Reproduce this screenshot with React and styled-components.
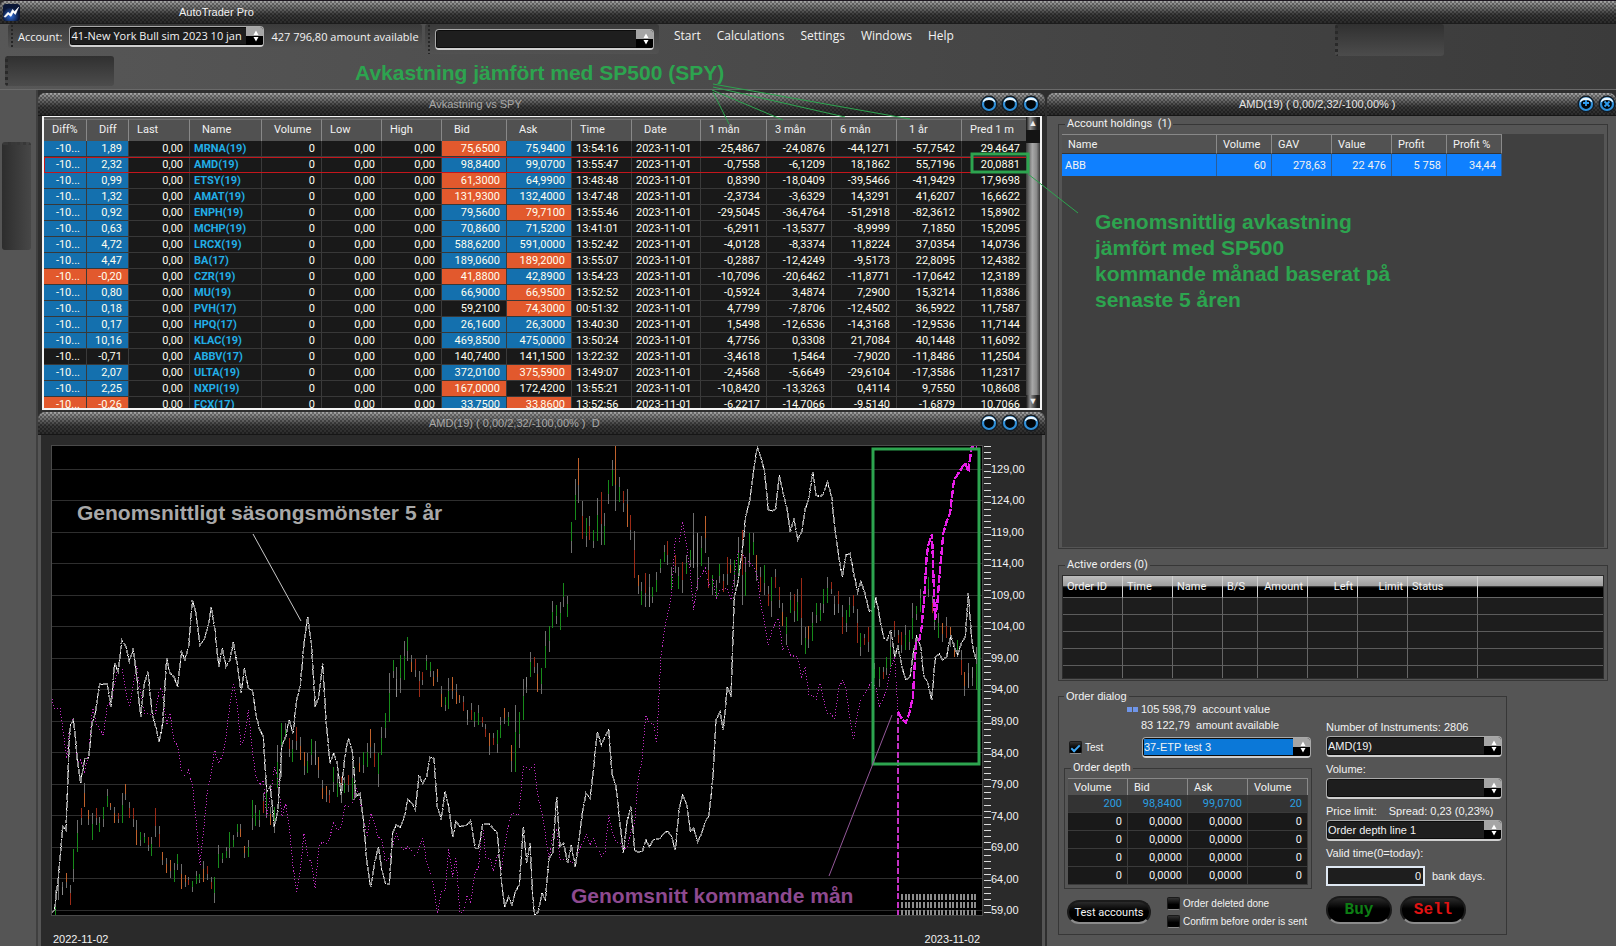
import React from "react";
import styled, { createGlobalStyle, css } from "styled-components";

const GlobalStyle = createGlobalStyle`
  * {
    box-sizing: border-box;
  }

  body {
    margin: 0;
    background: #2c2c2c;
    color: #f2f2f2;
    font-family: Roboto, "Open Sans", sans-serif;
    font-size: 11px;
  }

  button,
  input,
  select {
    font: inherit;
    color: inherit;
    margin: 0;
  }
`;

const plainFont = css`
  font-family: "Liberation Sans", Arial, sans-serif;
  font-size: 11px;
`;

const toolFont = css`
  font-family: "Open Sans", "Noto Sans", sans-serif;
  font-size: 11px;
`;

/* Carbon fibre look shared by every title bar */
const carbon = css`
  background:
    repeating-conic-gradient(rgba(0, 0, 0, 0.32) 0 25%, transparent 0 50%) 0 0 / 4px 4px,
    linear-gradient(#a8a8a8 0, #7c7c7c 20%, #5c5c5c 42%, #3a3a3a 62%, #2b2b2b 100%);
`;

const Page = styled.div`
  position: relative;
  display: flex;
  flex-direction: column;
  height: 100vh;
  min-height: 940px;
  overflow: hidden;
`;

const AppTitle = styled.header`
  ${carbon}
  ${plainFont}
  display: flex;
  align-items: center;
  gap: 159px;
  height: 24px;
  padding-left: 3px;
  border-top: 1px solid #1c1620;
  border-bottom: 1px solid #1c1c1c;
  border-radius: 6px 0 0 0;
`;

const ToolArea = styled.div`
  display: flex;
  flex-direction: column;
  gap: 6px;
  height: 66px;
  background: linear-gradient(90deg, #575757, #494949 50%, #3b3b3b);
  border-bottom: 1px solid #6a6a6a;
`;

const ToolRow = styled.div`
  ${toolFont}
  display: flex;
  align-items: flex-start;
  height: 26px;
`;

const Tray = styled.div`
  display: flex;
  align-items: center;
  gap: 7px;
  height: 24px;
  padding-left: 10px;
  border-radius: 3px;
  background:
    radial-gradient(circle, #262626 1px, transparent 1px) 2px 4px / 4px 4px repeat-y,
    linear-gradient(#3a3a3a, #525252);
`;

const AccountTray = styled(Tray)`
  width: 414px;
  margin-left: 8px;
  white-space: nowrap;
`;

const SearchTray = styled(Tray)`
  width: 234px;
  height: 30px;
  margin-left: 3px;
`;

const EmptyTray = styled.div`
  flex: none;
  width: 109px;
  height: 30px;
  margin-left: ${(p) => p.$left}px;
  border-radius: 3px;
  background: linear-gradient(#303030, #4c4c4c);
  border-left: 3px dotted #292929;
`;

const Menu = styled.nav`
  display: flex;
  flex: 1;
  gap: 16px;
  padding: 3px 0 0 15px;
  font-size: 12px;

  a {
    color: inherit;
    line-height: 18px;
    text-decoration: none;
  }
`;

const FloatTray = styled(EmptyTray)`
  height: 32px;
  margin: 0 172px 0 0;
`;

const Workspace = styled.main`
  display: flex;
  flex: 1;
  min-height: 0;
  background: #2e2e2e;
`;

const Rail = styled.aside`
  flex: none;
  width: 38px;
  padding: 52px 5px 0 2px;
  background: #555;
  border-right: 2px solid #3f3f3f;
`;

const RailTray = styled.div`
  height: 108px;
  border-radius: 3px;
  background: linear-gradient(90deg, #2d2d2d, #474747);
  border-top: 3px dotted #383838;
`;

const Desktop = styled.div`
  display: grid;
  grid-template-columns: minmax(0, 1007fr) minmax(0, 569fr);
  gap: 2px;
  flex: 1;
  padding-top: 3px;
  min-width: 0;
`;

const Stack = styled.div`
  display: flex;
  flex-direction: column;
  gap: 2px;
  min-height: 0;
`;

const WindowFrame = styled.section`
  display: flex;
  flex-direction: column;
  flex: ${(p) => (p.$grow ? "1" : "none")};
  min-height: 0;
`;

const TitleBar = styled.div`
  ${carbon}
  ${plainFont}
  display: flex;
  align-items: center;
  gap: 3px;
  height: 23px;
  padding: 0 ${(p) => (p.$active ? 0 : 5)}px 0 ${(p) => p.$indent}px;
  border-bottom: 1px solid #161616;
  border-radius: 7px 7px 0 0;
  color: ${(p) => (p.$active ? "#e6e6e6" : "#a9a9a9")};

  h2 {
    flex: 1;
    margin: 0;
    font-size: inherit;
    font-weight: normal;
    white-space: pre;
  }
`;

const OrbButton = styled.button`
  display: flex;
  width: 18px;
  height: 18px;
  padding: 0;
  border: 0;
  background: none;
`;

const QuoteView = styled.div`
  display: flex;
  height: 294px;
  margin: 0 3px 0 4px;
  border: 2px solid #f4f4f4;
  border-top-width: 1px;
  background: #555;
  overflow: hidden;
`;

const QuoteScroll = styled.div`
  flex: 1;
  padding-top: 2px;
  min-width: 0;
  overflow: hidden;
`;

const QuoteTable = styled.table`
  width: 100%;
  table-layout: fixed;
  border-collapse: separate;
  border-spacing: 0;
  line-height: 15px;
  white-space: nowrap;

  th {
    height: 22px;
    padding: 0 0 2px 8px;
    border-right: 1px solid #888;
    border-top: 1px solid #707070;
    background: #515151;
    font-weight: normal;
    text-align: left;
  }

  th.inset {
    padding-left: 12px;
  }
`;

const tones = { up: "#1470ae", down: "#e2592d", none: "#191919" };

const QuoteCell = styled.td`
  height: 16px;
  padding: 0 ${(p) => (p.$left ? 4 : 6)}px;
  border-right: 1px solid #3a3a3a;
  border-bottom: 1px solid #383838;
  background: ${(p) => tones[p.$tone || "none"]};
  color: ${(p) => (p.$name ? "#22aee6" : "#fffff0")};
  font-weight: ${(p) => (p.$name ? "bold" : "normal")};
  text-align: ${(p) => (p.$left ? "left" : "right")};
`;

const QuoteRow = styled.tr`
  outline: ${(p) => (p.$selected ? "1px solid #c4161c" : "none")};
  outline-offset: -1px;
`;

const ScrollBar = styled.div`
  display: flex;
  flex-direction: column;
  width: 14px;
  background: linear-gradient(90deg, #3a3a3a, #a8a8a8 45%, #8a8a8a 75%, #3c3c3c);

  button {
    height: 13px;
    padding: 0;
    border: 0;
    background: linear-gradient(90deg, #161616, #8e8e8e 30%, #222 80%);
    color: #eee;
    font-size: 9px;
    line-height: 13px;
  }

  i {
    flex: 1;
    border-top: 13px solid #141414;
  }
`;

const ChartBody = styled.div`
  position: relative;
  display: grid;
  grid-template-columns: minmax(0, 1fr) 8px 51px;
  grid-template-rows: minmax(0, 1fr) 30px;
  flex: 1;
  min-height: 0;
  padding: 10px 0 0 10px;
  background: #2a2a2a;
  border-left: 3px solid #555;
  border-right: 3px solid #555;
`;

const Plot = styled.svg`
  width: 100%;
  height: 100%;
  background: #000;
  outline: 1px solid #4a4a4a;
  outline-offset: -1px;
`;

const Scale = styled.ol`
  ${plainFont}
  display: grid;
  grid-template-rows: repeat(15, 1fr);
  align-items: center;
  margin: 8px 0 -10px;
  padding: 0;
  list-style: none;
`;

const DateRow = styled.div`
  ${plainFont}
  display: flex;
  justify-content: space-between;
  align-items: flex-end;
  padding: 0 3px 1px 2px;
`;

const Panel = styled.div`
  display: flex;
  flex-direction: column;
  gap: 9px;
  flex: 1;
  min-height: 0;
  padding: 1px 8px 11px 11px;
  background: #555;
`;

const Group = styled.fieldset`
  display: flex;
  flex-direction: column;
  min-width: 0;
  min-height: 0;
  margin: 0;
  padding: ${(p) => p.$pad || "3px 3px 1px"};
  border: 1px solid #373737;
  flex: ${(p) => (p.$grow ? "1" : "none")};

  legend {
    margin-left: 3px;
    padding: 0 2px;
    line-height: 14px;
    font-family: Roboto, "Open Sans", sans-serif;
    font-size: 11px;
  }
`;

const HoldingsArea = styled.div`
  flex: 1;
  background: #404040;
`;

const HoldingsTable = styled.table`
  width: 440px;
  table-layout: fixed;
  border-collapse: separate;
  border-spacing: 0;

  th {
    height: 20px;
    padding: 0 6px;
    background: #525252;
    border-top: 1px solid #888;
    border-right: 1px solid #8a8a8a;
    border-bottom: 1px solid #333;
    font-weight: normal;
    text-align: left;
  }

  td {
    height: 22px;
    padding: 0 5px 0 3px;
    background: #0f80ff;
    border-right: 1px solid #2a5d98;
    text-align: right;
  }

  td:first-child {
    text-align: left;
  }
`;

const OrdersTable = styled.table`
  width: 100%;
  table-layout: fixed;
  border-collapse: separate;
  border-spacing: 0;
  background: #1d1d1d;
  border: 1px solid #2c2c2c;

  th {
    height: 22px;
    padding: 0 4px;
    background: linear-gradient(#bdbdbd 0, #9c9c9c 48%, #3a3a3a 50%, #000 56%, #000);
    border-right: 1px solid #cfcfcf;
    border-bottom: 1px solid #666;
    font-weight: normal;
    text-align: left;
  }

  th.num {
    text-align: right;
  }

  td {
    height: 17px;
    padding: 0;
    border-right: 1px solid #666;
    border-bottom: 1px solid #5c5c5c;
  }

  tr:last-child td {
    height: 12px;
    border-bottom: 0;
  }

  th:last-child,
  td:last-child {
    border-right: 0;
  }
`;

const OrderGroup = styled(Group)`
  width: 449px;
  margin-top: 1px;
  padding: 0 4px 4px 5px;

  > legend {
    ${plainFont}
    margin-left: 0;
    line-height: 10px;
  }
`;

const OrderGrid = styled.div`
  ${plainFont}
  display: flex;
  gap: 14px;
`;

const OrderLeft = styled.div`
  width: 248px;
`;

const OrderRight = styled.div`
  display: flex;
  flex-direction: column;
  flex: 1;
  padding-top: 18px;
`;

const Balance = styled.p`
  display: flex;
  align-items: center;
  gap: 3px;
  margin: 0;
  padding-left: ${(p) => (p.$marked ? 63 : 77)}px;
  line-height: 16px;
  white-space: pre;
`;

const Marker = styled.span`
  width: 11px;
  height: 5px;
  background: linear-gradient(90deg, #6f95e8 5px, transparent 5px 6px, #6f95e8 6px);
`;

const TestRow = styled.div`
  display: flex;
  align-items: center;
  justify-content: space-between;
  height: 28px;
  padding: 0 1px 0 5px;
`;

const CheckLabel = styled.label`
  display: flex;
  align-items: center;
  gap: 3px;
  height: 18px;
  font-size: 10px;
  white-space: nowrap;

  input {
    display: grid;
    place-items: center;
    width: 13px;
    height: 13px;
    appearance: none;
    background: linear-gradient(#333, #000 60%);
    border: 1px solid #1b1b1b;
    border-bottom-color: #8a8a8a;
    border-radius: 2px;
  }

  input:checked::after {
    content: "";
    width: 7px;
    height: 3px;
    border: solid #3ea6f2;
    border-width: 0 0 2px 2px;
    transform: rotate(-45deg);
  }
`;

const ComboBox = styled.span`
  display: flex;
  align-items: center;
  width: ${(p) => (p.$width ? `${p.$width}px` : "100%")};
  height: 21px;
  padding-left: 1px;
  border: 1px solid #a9a9a9;
  border-bottom: 2px solid #d0d0d0;
  border-radius: 4px;
  background: #0c0c0c;
  overflow: hidden;

  select {
    flex: 1;
    min-width: 0;
    height: 16px;
    padding: 0;
    appearance: none;
    border: 0;
    background: ${(p) => (p.$picked ? "#0b78d8" : "#1e1e1e")};
    line-height: 16px;
  }
`;

const DepthTable = styled.table`
  width: 100%;
  table-layout: fixed;
  border-collapse: separate;
  border-spacing: 0;
  font-family: Roboto, "Open Sans", sans-serif;
  font-size: 11px;

  th {
    height: 17px;
    padding: 0 6px;
    background: #505050;
    border-top: 1px solid #888;
    border-right: 1px solid #8a8a8a;
    font-weight: normal;
    text-align: left;
  }

  td {
    height: 18px;
    padding: 0 5px;
    background: #191919;
    border-right: 1px solid #3a3a3a;
    border-bottom: 1px solid #3a3a3a;
    text-align: right;
  }

  tr.best td {
    background: #333;
    color: #2a9fe0;
  }
`;

const ActionRow = styled.div`
  display: flex;
  gap: 16px;
  padding: 5px 0 0 3px;
`;

const PillButton = styled.button`
  flex: none;
  height: ${(p) => (p.$big ? 28 : 24)}px;
  width: ${(p) => (p.$big ? 66 : 84)}px;
  margin-top: ${(p) => (p.$big ? 0 : 6)}px;
  padding: 0;
  border: 2px solid #1a1a1a;
  border-bottom-color: #8b8b8b;
  border-radius: 14px;
  background: linear-gradient(#2b2b2b, #000 45%);
  color: ${(p) => p.$color || "#f4f4f4"};
  font-family: ${(p) => (p.$big ? '"Liberation Mono", monospace' : "Roboto, sans-serif")};
  font-size: ${(p) => (p.$big ? 16 : 11)}px;
  font-weight: ${(p) => (p.$big ? "bold" : "normal")};
  white-space: nowrap;
`;

const FieldLabel = styled.label`
  display: flex;
  flex-direction: column;
  line-height: 17px;
  margin-bottom: 4px;
  white-space: nowrap;

  span > span {
    margin-left: 12px;
  }
`;

const DaysRow = styled.div`
  display: flex;
  align-items: center;
  gap: 7px;
  margin-bottom: 10px;

  input {
    width: 99px;
    height: 20px;
    padding: 0 2px;
    border: 2px solid #dfe8f2;
    background: #1e1e1e;
    text-align: right;
  }
`;

const TradeRow = styled.div`
  display: flex;
  gap: 8px;
`;

/* Notes and pointer lines lie over the windows */
const Pointers = styled.svg`
  position: absolute;
  inset: 0;
  width: 1616px;
  height: 946px;
  pointer-events: none;
`;

const Note = styled.p`
  position: absolute;
  left: ${(p) => p.$x}px;
  top: ${(p) => p.$y}px;
  margin: 0;
  color: ${(p) => p.$color};
  font: bold 21px/26px "Liberation Sans", Arial, sans-serif;
  white-space: pre-line;
`;

const quoteColumns = [
  ["Diff%", 43], ["Diff", 42, 1], ["Last", 61], ["Name", 72, 1],
  ["Volume", 60, 1], ["Low", 60], ["High", 60], ["Bid", 65, 1],
  ["Ask", 65, 1], ["Time", 60], ["Date", 69, 1], ["1 mån", 66],
  ["3 mån", 65], ["6 mån", 65], ["1 år", 65, 1], ["Pred 1 m", 65],
];

// diff, name, bid, ask, time, 1 m, 3 m, 6 m, 1 y, prediction, tones of diff / bid / ask
const quotes = [
  ["1,89", "MRNA(19)", "75,6500", "75,9400", "13:54:16", "-25,4867", "-24,0876", "-44,1271", "-57,7542", "29,4647", "udu"],
  ["2,32", "AMD(19)", "98,8400", "99,0700", "13:55:47", "-0,7558", "-6,1209", "18,1862", "55,7196", "20,0881", "uuu"],
  ["0,99", "ETSY(19)", "61,3000", "64,9900", "13:48:48", "0,8390", "-18,0409", "-39,5466", "-41,9429", "17,9698", "udu"],
  ["1,32", "AMAT(19)", "131,9300", "132,4000", "13:47:48", "-2,3734", "-3,6329", "14,3291", "41,6207", "16,6622", "udu"],
  ["0,92", "ENPH(19)", "79,5600", "79,7100", "13:55:46", "-29,5045", "-36,4764", "-51,2918", "-82,3612", "15,8902", "uud"],
  ["0,63", "MCHP(19)", "70,8600", "71,5200", "13:41:01", "-6,2911", "-13,5377", "-8,9999", "7,1850", "15,2095", "uuu"],
  ["4,72", "LRCX(19)", "588,6200", "591,0000", "13:52:42", "-4,0128", "-8,3374", "11,8224", "37,0354", "14,0736", "uuu"],
  ["4,47", "BA(17)", "189,0600", "189,2000", "13:55:07", "-0,2887", "-12,4249", "-9,5173", "22,8095", "12,4382", "uud"],
  ["-0,20", "CZR(19)", "41,8800", "42,8900", "13:54:23", "-10,7096", "-20,6462", "-11,8771", "-17,0642", "12,3189", "ddu"],
  ["0,80", "MU(19)", "66,9000", "66,9500", "13:52:52", "-0,5924", "3,4874", "7,2900", "15,3214", "11,8386", "uud"],
  ["0,18", "PVH(17)", "59,2100", "74,3000", "00:51:32", "4,7799", "-7,8706", "-12,4502", "36,5922", "11,7587", "und"],
  ["0,17", "HPQ(17)", "26,1600", "26,3000", "13:40:30", "1,5498", "-12,6536", "-14,3168", "-12,9536", "11,7144", "uuu"],
  ["10,16", "KLAC(19)", "469,8500", "475,0000", "13:50:24", "4,7756", "0,3308", "21,7084", "40,1448", "11,6092", "uuu"],
  ["-0,71", "ABBV(17)", "140,7400", "141,1500", "13:22:32", "-3,4618", "1,5464", "-7,9020", "-11,8486", "11,2504", "nnn"],
  ["2,07", "ULTA(19)", "372,0100", "375,5900", "13:49:07", "-2,4568", "-5,6649", "-29,6104", "-17,3586", "11,2317", "uud"],
  ["2,25", "NXPI(19)", "167,0000", "172,4200", "13:55:21", "-10,8420", "-13,3263", "0,4114", "9,7550", "10,8608", "udn"],
  ["-0,26", "FCX(17)", "33,7500", "33,8600", "13:52:56", "-6,2217", "-14,7066", "-9,5140", "-1,6879", "10,7066", "dud"],
];

const toneOf = { u: "up", d: "down", n: "none" };

const season =
  "64,1450 74,1440 88,1310 98,1190 108,1200 118,925 122,885 130,870 134,900 142,990 152,1060 164,985 176,985 186,880 196,850 209,762 232,762 243,830 254,700 265,725 275,630 288,650 298,695 310,655 320,740 332,860 342,765 354,725 366,850 377,890 388,935 398,880 410,685 420,730 432,740 443,770 454,665 465,690 476,650 487,510 498,550 510,645 523,628 534,590 544,530 555,600 566,710 577,655 588,710 600,690 610,635 621,700 633,790 643,715 655,775 667,780 677,850 688,895 700,920 710,1085 721,1070 733,1190 744,1140 755,950 767,920 778,870 789,910 800,810 811,765 822,640 833,560 844,640 856,830 866,800 878,700 888,870 900,1000 911,970 922,1000 934,1095 944,980 955,925 967,965 978,1100 990,1090 1000,1170 1010,1290 1022,1370 1034,1300 1045,1250 1056,1320 1066,1360 1078,1362 1088,1210 1098,1185 1112,1192 1124,1155 1134,1108 1146,1120 1156,1140 1167,1035 1178,1060 1190,1040 1200,982 1212,985 1222,1130 1234,1170 1245,1085 1256,1130 1268,1220 1278,1175 1290,1190 1312,1185 1322,1172 1336,1255 1346,1255 1358,1182 1378,1182 1402,1210 1412,1330 1424,1430 1436,1400 1446,1425 1456,1385 1468,1365 1480,1190 1490,1300 1500,1240 1508,1400 1514,1455 1525,1445 1536,1390 1546,1410 1557,1285 1568,1270 1580,1100 1590,1250 1601,1240 1613,1300 1624,1245 1636,1310 1646,1240 1657,1150 1668,1090 1681,1105 1691,1010 1702,905 1714,945 1725,920 1736,900 1746,1030 1758,1070 1770,1180 1780,1270 1792,1170 1803,1130 1814,1260 1825,1267 1837,1265 1848,1230 1858,1250 1870,1230 1890,1225 1902,1210 1913,1203 1925,1220 1936,1260 1947,1140 1958,1095 1970,1125 1981,1205 1991,1195 2003,1235 2015,1210 2026,1175 2037,1155 2048,1050 2058,870 2070,845 2080,900 2092,770 2103,800 2113,500 2125,450 2136,370 2147,260 2160,210 2170,130 2182,50 2192,80 2203,120 2215,240 2225,243 2237,237 2248,135 2258,185 2270,230 2281,305 2292,265 2303,330 2315,305 2326,235 2337,205 2348,125 2358,195 2370,200 2380,192 2393,155 2405,200 2415,300 2426,380 2437,440 2448,375 2460,370 2471,430 2483,485 2493,455 2505,490 2518,545 2530,540 2538,500 2550,570 2562,625 2572,630 2582,600 2594,680 2604,650 2617,715 2628,750 2640,740 2650,670 2660,620 2672,650 2682,740 2694,760 2705,810 2716,680 2728,672 2738,690 2750,680 2762,615 2772,650 2783,675 2794,640 2806,620 2815,490 2826,640 2838,690";

const average =
  "64,790 72,835 90,835 100,910 110,985 118,900 130,865 142,1000 152,990 164,1025 176,970 188,830 198,880 220,915 232,825 243,820 254,760 265,705 276,710 288,790 298,830 308,770 320,705 332,790 344,850 376,855 388,775 396,780 410,885 420,850 432,930 444,950 454,1020 465,1040 476,1020 488,1070 500,1190 510,1305 522,1190 532,1080 542,1040 554,960 566,1000 578,975 588,920 600,820 611,760 622,830 633,945 644,920 655,840 668,970 678,1040 690,1065 700,1050 710,1160 722,1090 734,1010 744,1050 756,1160 767,1120 778,1190 788,1300 800,1385 812,1310 822,1210 834,1285 844,1295 855,1375 867,1250 878,1235 890,1240 900,1220 911,1175 922,1205 934,1190 945,1125 957,1130 968,1120 978,1070 990,1110 1000,1165 1012,1220 1022,1150 1034,1180 1044,1220 1056,1230 1066,1295 1080,1280 1098,1210 1112,1250 1124,1260 1134,1248 1156,1280 1167,1255 1178,1220 1190,1300 1210,1360 1222,1450 1234,1385 1246,1380 1256,1255 1268,1340 1278,1285 1290,1450 1300,1445 1312,1395 1322,1420 1334,1330 1346,1310 1357,1180 1368,1285 1380,1285 1390,1325 1402,1275 1414,1320 1424,1250 1434,1190 1446,1150 1466,1155 1480,1010 1500,1018 1512,1000 1522,1090 1540,1170 1557,1290 1568,1215 1580,1195 1590,1290 1613,1285 1624,1300 1636,1290 1646,1265 1657,1240 1668,1212 1680,1245 1691,1225 1703,1255 1714,1280 1725,1265 1736,1155 1746,1200 1758,1235 1770,1240 1780,1260 1792,1250 1803,1205 1814,1180 1824,1050 1836,990 1847,855 1858,878 1870,880 1880,940 1892,690 1903,600 1914,550 1925,490 1936,325 1947,335 1958,275 1970,350 1980,420 1991,540 2003,450 2014,435 2026,415 2037,470 2048,445 2059,505 2070,480 2090,475 2103,510 2114,430 2125,365 2136,360 2147,400 2158,395 2170,410 2182,440 2192,520 2204,580 2215,645 2226,600 2237,575 2246,565 2258,660 2270,645 2281,675 2303,682 2315,745 2325,710 2337,795 2347,795 2358,812 2370,755 2381,810 2392,850 2403,852 2414,865 2426,775 2438,750 2448,780 2460,870 2471,930 2482,850 2492,810 2505,790 2528,750 2538,775 2548,828 2560,805 2570,780 2582,715 2594,680 2604,850";

const forecast =
  "2604,845 2615,865 2627,878 2638,850 2649,800 2652,740 2658,640 2668,630 2675,590 2683,500 2690,380 2695,345 2706,312 2710,430 2715,570 2722,520 2730,420 2740,310 2750,275 2760,250 2772,150 2785,130 2795,115 2805,98 2815,125 2825,50 2842,50";

// x, high, low, colour of the body
const candles =
  "76 1380 1458 g;86 1310 1410 w;97 1355 1395 w;109 1330 1375 o;121 1365 1425 r;130 1258 1355 g;142 1170 1265 g;154 1135 1185 r;164 1060 1130 o;176 1140 1185 o;187 1150 1230 g;199 1133 1185 r;208 1160 1205 g;220 1130 1190 g;232 1078 1130 g;242 1120 1140 o;254 1130 1180 o;265 1148 1180 r;277 1090 1180 g;287 1062 1110 o;298 1115 1165 r;310 1135 1190 r;320 1170 1245 o;331 1205 1248 g;343 1210 1240 g;355 1222 1262 r;365 1220 1278 g;376 1135 1222 r;388 1188 1250 r;397 1265 1305 o;409 1285 1330 o;421 1290 1345 o;433 1298 1355 g;442 1272 1320 g;454 1302 1378 o;466 1335 1370 o;476 1340 1365 r;488 1352 1385 g;500 1322 1362 g;509 1332 1360 g;521 1293 1355 o;532 1308 1350 r;544 1342 1378 r;553 1342 1420 g;565 1245 1315 g;577 1268 1298 g;588 1250 1285 g;599 1205 1285 g;610 1215 1250 g;622 1182 1220 g;632 1182 1222 o;643 1248 1285 o;655 1230 1282 g;666 1110 1200 g;677 1125 1188 g;688 1140 1192 g;700 1090 1150 r;710 1090 1165 g;721 1130 1185 o;733 1130 1210 g;743 945 1075 g;754 878 1040 g;767 878 930 g;778 925 980 r;788 930 995 g;800 892 960 r;811 920 990 o;822 965 1035 o;833 968 1028 g;844 928 1005 g;855 932 1005 w;866 982 1045 o;878 1050 1108 o;888 1068 1115 o;898 1080 1120 r;910 1010 1085 g;922 1030 1100 g;934 1040 1120 r;944 1040 1090 g;955 1035 1085 r;967 1000 1110 g;974 1010 1110 g;988 980 1025 o;1000 965 1030 g;1012 938 1010 g;1021 898 985 o;1034 940 1010 r;1045 970 1072 g;1054 890 975 g;1066 848 925 g;1078 730 875 g;1090 690 745 g;1100 710 800 w;1111 675 788 g;1123 632 750 g;1132 622 692 g;1145 675 725 o;1156 688 740 r;1168 722 800 r;1178 725 765 r;1190 676 720 g;1201 695 740 g;1210 722 768 o;1222 718 755 o;1234 768 830 o;1246 800 842 g;1256 745 838 g;1267 742 808 o;1279 762 822 o;1288 795 820 o;1300 798 842 r;1312 840 885 w;1324 818 870 r;1334 845 890 g;1345 826 885 g;1357 862 892 r;1367 882 922 r;1378 908 975 o;1390 908 945 r;1402 900 968 g;1412 860 925 g;1424 835 882 o;1435 845 888 g;1444 945 1025 o;1456 825 1025 g;1468 845 955 g;1480 748 870 g;1489 740 790 w;1502 665 740 g;1513 682 730 r;1522 698 785 o;1534 714 792 g;1546 602 715 g;1558 588 665 g;1568 514 595 g;1580 525 582 g;1591 515 600 g;1600 460 530 g;1612 498 560 g;1624 277 368 g;1636 147 270 g;1645 85 220 o;1657 212 328 r;1669 265 352 g;1678 258 330 r;1690 300 355 g;1702 205 332 g;1714 185 345 r;1723 248 345 g;1735 150 222 g;1747 90 168 g;1756 45 243 o;1768 140 215 g;1780 182 245 r;1792 178 290 o;1801 255 330 r;1813 302 445 r;1825 435 492 o;1834 455 525 g;1846 428 530 r;1858 432 532 w;1868 472 520 g;1880 425 485 g;1891 388 430 g;1903 345 395 g;1912 333 405 r;1925 410 480 g;1936 375 430 r;1946 410 478 g;1958 395 488 r;1970 375 432 g;1980 360 412 g;1990 250 415 w;2002 308 480 w;2014 318 408 g;2026 258 370 o;2036 382 475 r;2047 435 495 g;2059 450 508 g;2068 402 460 g;2080 432 485 r;2092 382 465 r;2102 388 430 o;2114 390 470 g;2126 322 440 g;2137 300 525 r;2146 380 498 g;2158 310 410 g;2170 308 375 g;2180 375 452 o;2190 410 485 r;2203 405 495 g;2214 468 528 r;2225 440 562 g;2236 418 475 r;2248 472 535 r;2258 520 588 o;2269 560 645 g;2281 485 550 g;2293 492 575 r;2302 478 572 g;2314 445 645 r;2326 590 672 g;2336 588 655 o;2347 545 632 g;2359 520 580 g;2370 520 572 g;2380 478 550 g;2392 442 520 g;2404 455 492 r;2414 498 555 w;2426 482 550 r;2437 525 612 r;2448 540 605 g;2458 502 560 g;2470 495 550 r;2482 538 640 r;2492 610 678 g;2503 612 645 r;2515 590 665 r;2534 700 745 g;2548 712 772 g;2560 710 748 r;2570 680 735 g;2582 610 710 g;2594 573 620 r;2604 600 640 r;2614 605 670 r;2626 585 660 g;2638 600 660 g;2648 520 628 g;2660 528 570 g;2672 478 545 g;2694 440 500 g;2706 498 550 r;2714 540 600 g;2726 550 625 g;2737 578 635 o;2750 562 625 r;2760 590 650 o;2772 640 680 o;2783 630 680 g;2794 660 735 r;2803 725 798 o;2816 698 775 w;2827 710 768 w;2840 650 780 g"
    .split(";")
    .map((item) => item.split(" "));

const candleColors = { g: "#178a1a", r: "#9c2a16", o: "#c0622c", w: "#8a8a8a" };

const prices = Array.from({ length: 15 }, (_, i) => `${129 - i * 5},00`);

function Logo() {
  return (
    <svg width="17" height="17" viewBox="0 0 17 17" aria-hidden="true">
      <defs>
        <radialGradient id="logoGlow" cx="45%" cy="70%">
          <stop offset="0" stopColor="#2f6fe0" />
          <stop offset="1" stopColor="#0a1636" />
        </radialGradient>
      </defs>
      <rect width="17" height="17" rx="3" fill="url(#logoGlow)" />
      <path d="M1 12.8 L5 8.2 L7.2 10 L9.6 5.4 L11.6 7.6 L15.6 3.2 L12.4 10.4 L10.2 8.4 L8 12.4 L5.4 10.4 L2.6 13 Z" fill="#fff" stroke="#fff" strokeWidth="0.6" />
    </svg>
  );
}

function Orb({ label, mark }) {
  return (
    <OrbButton type="button" aria-label={label}>
      <svg width="18" height="18" viewBox="0 0 18 18">
        <circle cx="9" cy="9" r="8.5" fill="#141c24" />
        <circle cx="9" cy="9" r="6" fill="#02060a" stroke="#2f8fd8" strokeWidth="2.2" />
        <path d="M2.6 7.4 A6.6 6.6 0 0 1 15.4 7.4 Q9 2.6 2.6 7.4" fill="#eaf7ff" />
        {mark && <path d={mark} fill="none" stroke="#2f9df0" strokeWidth="1.8" />}
      </svg>
    </OrbButton>
  );
}

function Combo({ label, value, width, picked }) {
  return (
    <ComboBox $width={width} $picked={picked}>
      <select aria-label={label} defaultValue={value}>
        <option value={value}>{value}</option>
      </select>
      <svg width="17" height="18" viewBox="0 0 17 18" aria-hidden="true">
        <rect width="17" height="9" fill="#a5a5a5" />
        <rect y="9" width="17" height="9" fill="#000" />
        <path d="M10 3.5 L12.5 8 H7.5 Z M10 14.5 L12.5 10 H7.5 Z" fill="#fff" />
      </svg>
    </ComboBox>
  );
}

function WindowTitle({ title, indent, active, children }) {
  return (
    <TitleBar $indent={indent} $active={active}>
      <h2>{title}</h2>
      {children}
    </TitleBar>
  );
}

function WindowButtons() {
  return (
    <>
      <Orb label="Minimize" />
      <Orb label="Maximize" />
      <Orb label="Close" />
    </>
  );
}

function QuoteWindow() {
  return (
    <WindowFrame>
      <WindowTitle title="Avkastning vs SPY" indent={391}>
        <WindowButtons />
      </WindowTitle>
      <QuoteView>
        <QuoteScroll>
          <QuoteTable>
            <colgroup>
              {quoteColumns.map(([name, width]) => (
                <col key={name} width={width} />
              ))}
            </colgroup>
            <thead>
              <tr>
                {quoteColumns.map(([name, , inset]) => (
                  <th key={name} className={inset ? "inset" : undefined}>{name}</th>
                ))}
              </tr>
            </thead>
            <tbody>
              {quotes.map(([diff, name, bid, ask, time, ...rest]) => {
                const t = rest[5];
                return (
                  <QuoteRow key={name} $selected={name === "AMD(19)"}>
                    <QuoteCell $tone={toneOf[t[0]]}>-10...</QuoteCell>
                    <QuoteCell $tone={toneOf[t[0]]}>{diff}</QuoteCell>
                    <QuoteCell>0,00</QuoteCell>
                    <QuoteCell $name $left>{name}</QuoteCell>
                    <QuoteCell>0</QuoteCell>
                    <QuoteCell>0,00</QuoteCell>
                    <QuoteCell>0,00</QuoteCell>
                    <QuoteCell $tone={toneOf[t[1]]}>{bid}</QuoteCell>
                    <QuoteCell $tone={toneOf[t[2]]}>{ask}</QuoteCell>
                    <QuoteCell $left>{time}</QuoteCell>
                    <QuoteCell $left>2023-11-01</QuoteCell>
                    {rest.slice(0, 5).map((value, i) => (
                      <QuoteCell key={i}>{value}</QuoteCell>
                    ))}
                  </QuoteRow>
                );
              })}
            </tbody>
          </QuoteTable>
        </QuoteScroll>
        <ScrollBar>
          <button type="button" aria-label="Scroll up">▲</button>
          <i />
          <button type="button" aria-label="Scroll down">▼</button>
        </ScrollBar>
      </QuoteView>
    </WindowFrame>
  );
}

function ChartWindow() {
  return (
    <WindowFrame $grow>
      <WindowTitle title="AMD(19) ( 0,00/2,32/-100,00% )  D" indent={391}>
        <WindowButtons />
      </WindowTitle>
      <ChartBody>
        <Plot viewBox="63 45 2796 1413" preserveAspectRatio="none" shapeRendering="crispEdges">
          {/* Price grid */}
          {prices.map((price, i) => (
            <line key={price} x1="63" x2="2859" y1={118 + i * 94.5} y2={118 + i * 94.5} stroke="#2e2e2e" strokeWidth="3" />
          ))}
          {/* Price bars with a grey wick behind the body */}
          {candles.map(([x, high, low, color], i) => {
            const length = low - high;
            const start = i % 2 ? Number(high) : Number(high) + length * 0.4;
            return (
              <g key={x} strokeWidth="3">
                <line x1={x} x2={x} y1={high} y2={low} stroke="#6e6e6e" />
                <line x1={x} x2={x} y1={start} y2={start + length * 0.6} stroke={candleColors[color]} />
              </g>
            );
          })}
          <polyline points={average} fill="none" stroke="#c02cc0" strokeWidth="3" strokeDasharray="3 6" />
          <polyline points={season} fill="none" stroke="#8a8a8a" strokeWidth="5" strokeDasharray="18 5" />
          <polyline points={season} fill="none" stroke="#fff" strokeWidth="3" strokeDasharray="4 19" strokeDashoffset="-18" />
          {[1401, 1425, 1449].map((y) => (
            <line key={y} x1="2613" x2="2842" y1={y} y2={y} stroke="#8c8c8c" strokeWidth="18" strokeDasharray="6 5" />
          ))}
          <line x1="2604" x2="2604" y1="1458" y2="845" stroke="#c432c4" strokeWidth="6" strokeDasharray="18 7" />
          <polyline points={forecast} fill="none" stroke="#e81ee8" strokeWidth="7" strokeDasharray="24 5" />
        </Plot>
        <svg width="8" height="100%" viewBox="0 0 8 471" preserveAspectRatio="none" shapeRendering="crispEdges">
          {Array.from({ length: 75 }, (_, i) => (
            <line key={i} x1="1" x2="8" y1={1 + i * 6.3} y2={1 + i * 6.3} stroke="#ddd" />
          ))}
        </svg>
        <Scale>
          {prices.map((price) => (
            <li key={price}>{price}</li>
          ))}
        </Scale>
        <DateRow>
          <time>2022-11-02</time>
          <time>2023-11-02</time>
        </DateRow>
      </ChartBody>
    </WindowFrame>
  );
}

function Holdings() {
  const widths = [155, 55, 60, 60, 55, 55];
  return (
    <Group $grow $pad="3px 3px 1px">
      <legend>Account holdings&nbsp; (1)</legend>
      <HoldingsArea>
        <HoldingsTable>
          <colgroup>
            {widths.map((width, i) => (
              <col key={i} width={width} />
            ))}
          </colgroup>
          <thead>
            <tr>
              <th>Name</th>
              <th>Volume</th>
              <th>GAV</th>
              <th>Value</th>
              <th>Profit</th>
              <th>Profit %</th>
            </tr>
          </thead>
          <tbody>
            <tr>
              <td>ABB</td>
              <td>60</td>
              <td>278,63</td>
              <td>22 476</td>
              <td>5 758</td>
              <td>34,44</td>
            </tr>
          </tbody>
        </HoldingsTable>
      </HoldingsArea>
    </Group>
  );
}

function ActiveOrders() {
  const columns = [
    ["Order ID", 60], ["Time", 50], ["Name", 50], ["B/S", 35], ["Amount", 50, 1],
    ["Left", 50, 1], ["Limit", 50, 1], ["Status", 70], ["", undefined],
  ];
  return (
    <Group>
      <legend>Active orders (0)</legend>
      <OrdersTable>
        <colgroup>
          {columns.map(([name, width]) => (
            <col key={name} width={width} />
          ))}
        </colgroup>
        <thead>
          <tr>
            {columns.map(([name, , num]) => (
              <th key={name} className={num ? "num" : undefined}>{name}</th>
            ))}
          </tr>
        </thead>
        <tbody>
          {[0, 1, 2, 3, 4].map((row) => (
            <tr key={row}>
              {columns.map(([name]) => (
                <td key={name} />
              ))}
            </tr>
          ))}
        </tbody>
      </OrdersTable>
    </Group>
  );
}

function OrderDialog() {
  return (
    <OrderGroup>
      <legend>Order dialog</legend>
      <OrderGrid>
        <OrderLeft>
          <Balance $marked><Marker />105 598,79  account value</Balance>
          <Balance>83 122,79  amount available</Balance>
          <TestRow>
            <CheckLabel>
              <input type="checkbox" defaultChecked />
              Test
            </CheckLabel>
            <Combo label="Test account" value="37-ETP test 3" width={169} picked />
          </TestRow>
          <Group $pad="3px">
            <legend>Order depth</legend>
            <DepthTable>
              <thead>
                <tr>
                  <th>Volume</th>
                  <th>Bid</th>
                  <th>Ask</th>
                  <th>Volume</th>
                </tr>
              </thead>
              <tbody>
                <tr className="best">
                  <td>200</td>
                  <td>98,8400</td>
                  <td>99,0700</td>
                  <td>20</td>
                </tr>
                {[0, 1, 2, 3].map((row) => (
                  <tr key={row}>
                    <td>0</td>
                    <td>0,0000</td>
                    <td>0,0000</td>
                    <td>0</td>
                  </tr>
                ))}
              </tbody>
            </DepthTable>
          </Group>
          <ActionRow>
            <PillButton type="button">Test accounts</PillButton>
            <div>
              <CheckLabel>
                <input type="checkbox" />
                Order deleted done
              </CheckLabel>
              <CheckLabel>
                <input type="checkbox" />
                Confirm before order is sent
              </CheckLabel>
            </div>
          </ActionRow>
        </OrderLeft>
        <OrderRight>
          <FieldLabel>
            <span>Number of Instruments: 2806</span>
            <Combo label="Instrument" value="AMD(19)" />
          </FieldLabel>
          <FieldLabel>
            <span>Volume:</span>
            <Combo label="Volume" value="" />
          </FieldLabel>
          <FieldLabel>
            <span>Price limit:<span>Spread: 0,23 (0,23%)</span></span>
            <Combo label="Price limit" value="Order depth line 1" />
          </FieldLabel>
          <FieldLabel htmlFor="days">Valid time(0=today):</FieldLabel>
          <DaysRow>
            <input id="days" type="text" defaultValue="0" />
            <span>bank days.</span>
          </DaysRow>
          <TradeRow>
            <PillButton type="button" $big $color="#0d7d14">Buy</PillButton>
            <PillButton type="button" $big $color="#e01212">Sell</PillButton>
          </TradeRow>
        </OrderRight>
      </OrderGrid>
    </OrderGroup>
  );
}

function App() {
  return (
    <Page>
      <GlobalStyle />
      <AppTitle>
        <Logo />
        <span>AutoTrader Pro</span>
      </AppTitle>

      {/* Toolbars */}
      <ToolArea>
        <ToolRow>
          <AccountTray>
            <span>Account:</span>
            <Combo label="Account" value="41-New York Bull sim 2023 10 jan" width={195} />
            <span>427 796,80 amount available</span>
          </AccountTray>
          <SearchTray>
            <Combo label="Instrument list" value="" width={219} />
          </SearchTray>
          <Menu>
            {["Start", "Calculations", "Settings", "Windows", "Help"].map((item) => (
              <a key={item} href="#">{item}</a>
            ))}
          </Menu>
          <FloatTray />
        </ToolRow>
        <EmptyTray $left={5} />
      </ToolArea>

      <Workspace>
        <Rail>
          <RailTray />
        </Rail>
        <Desktop>
          <Stack>
            <QuoteWindow />
            <ChartWindow />
          </Stack>
          <WindowFrame $grow>
            <WindowTitle title="AMD(19) ( 0,00/2,32/-100,00% )" indent={192} active>
              <Orb label="Restore" mark="M9 5 V11 M6 8 H12" />
              <Orb label="Close" mark="M6.5 6.5 L11.5 11.5 M11.5 6.5 L6.5 11.5" />
            </WindowTitle>
            <Panel>
              <Holdings />
              <ActiveOrders />
              <OrderDialog />
            </Panel>
          </WindowFrame>
        </Desktop>
      </Workspace>

      {/* Pointer lines and frames of the notes */}
      <Pointers viewBox="0 0 1616 946" fill="none">
        <path d="M713 92 L729 124 M712 90 L783 120 M713 87 L845 117 M713 84 L910 119 M1028 174 L1078 213" stroke="#2da44f" />
        <rect x="972" y="154" width="56" height="18" stroke="#2da44f" strokeWidth="3" />
        <rect x="873" y="449" width="106" height="315" stroke="#2da44f" strokeWidth="3" />
        <path d="M253 534 L301 621" stroke="#c8c8c8" />
        <path d="M829 876 L892 715" stroke="#94589a" />
      </Pointers>
      <Note $x={355} $y={60} $color="#2da44f">Avkastning jämfört med SP500 (SPY)</Note>
      <Note $x={1095} $y={209} $color="#2da44f">
        {"Genomsnittlig avkastning\njämfört med SP500\nkommande månad baserat på\nsenaste 5 åren"}
      </Note>
      <Note $x={77} $y={500} $color="#a8a8a8">Genomsnittligt säsongsmönster 5 år</Note>
      <Note $x={571} $y={883} $color="#8e4a90">Genomsnitt kommande mån</Note>
    </Page>
  );
}

export default App;
